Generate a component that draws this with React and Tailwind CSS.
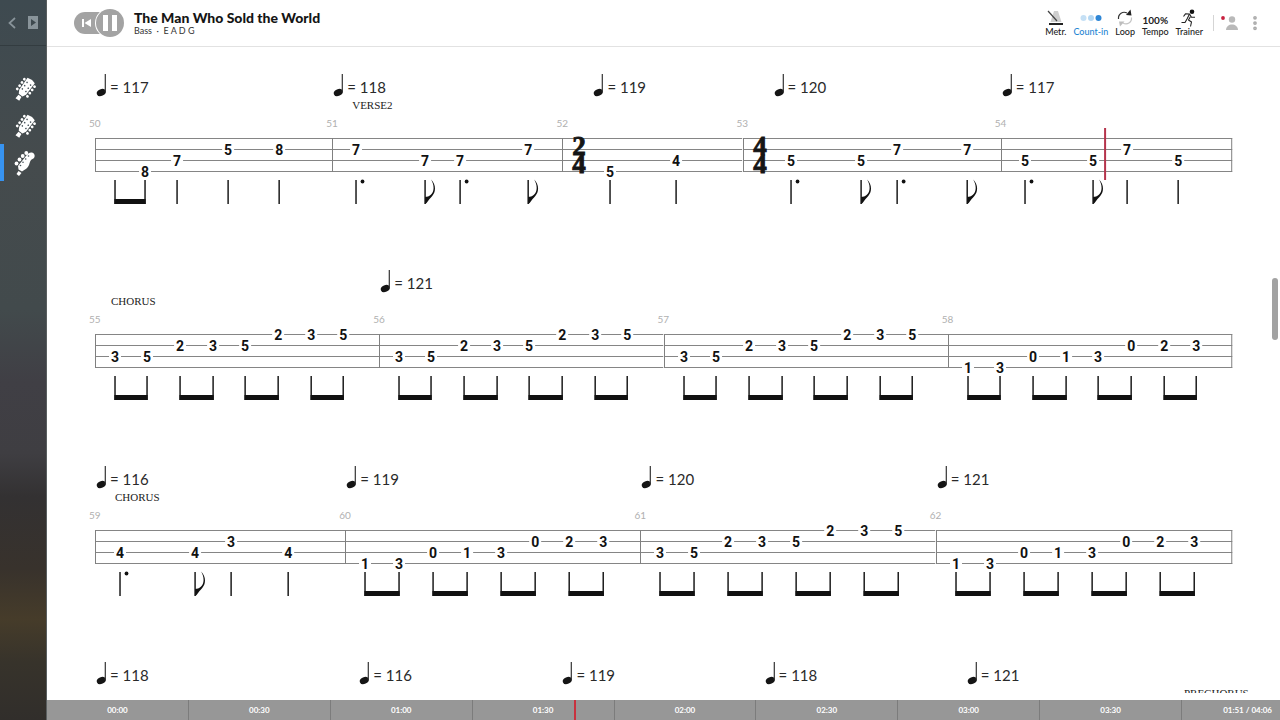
import { MoreVertical } from 'lucide-react';

// ─── Score data ───────────────────────────────────────────────────────────────
// note: [offset inside the measure, fret, string, mark]
// string 1 is the highest line, mark is 'dot' or 'flag'

const SLOTS = [20, 52, 85, 118, 150, 183, 216, 248];
const SLOTS_WIDE = [20, 54, 88, 122, 156, 190, 224, 258];

const RISE = [['3', 3], ['5', 3], ['2', 2], ['3', 2], ['5', 2], ['2', 1], ['3', 1], ['5', 1]];
const TURN = [['1', 4], ['3', 4], ['0', 3], ['1', 3], ['3', 3], ['0', 2], ['2', 2], ['3', 2]];

const PAIRS = [[0, 1], [2, 3], [4, 5], [6, 7]];

const place = (slots, riff) => riff.map(([fret, string], i) => [slots[i], fret, string]);

const SYSTEMS = [
  [
    {
      number: 50, width: 237, tempo: 117, beams: [[0, 1]],
      notes: [[20, '', 4], [50, '8', 4], [82, '7', 3], [133, '5', 2], [184, '8', 2]],
    },
    {
      number: 51, width: 230, tempo: 118, marker: 'VERSE2', markerPad: 'pl-5',
      notes: [[24, '7', 2, 'dot'], [93, '7', 3, 'flag'], [128, '7', 3, 'dot'], [196, '7', 2, 'flag']],
    },
    {
      number: 52, width: 180, tempo: 119, time: ['2', '4'],
      notes: [[48, '5', 4], [114, '4', 3]],
    },
    {
      number: 53, width: 258, tempo: 120, time: ['4', '4'],
      notes: [[48, '5', 3, 'dot'], [118, '5', 3, 'flag'], [154, '7', 2, 'dot'], [224, '7', 2, 'flag']],
    },
    {
      number: 54, width: 231, tempo: 117, cursor: 103,
      notes: [[24, '5', 3, 'dot'], [92, '5', 3, 'flag'], [126, '7', 2], [177, '5', 3]],
    },
  ],
  [
    { number: 55, width: 284, marker: 'CHORUS', markerPad: 'pl-4', beams: PAIRS, notes: place(SLOTS, RISE) },
    { number: 56, width: 284, tempo: 121, beams: PAIRS, notes: place(SLOTS, RISE) },
    { number: 57, width: 284, beams: PAIRS, notes: place(SLOTS, RISE) },
    { number: 58, width: 284, beams: PAIRS, notes: place(SLOTS, TURN) },
  ],
  [
    {
      number: 59, width: 250, tempo: 116, marker: 'CHORUS', markerPad: 'pl-5',
      notes: [[25, '4', 3, 'dot'], [100, '4', 3, 'flag'], [136, '3', 2], [193, '4', 3]],
    },
    { number: 60, width: 295, tempo: 119, beams: PAIRS, notes: place(SLOTS_WIDE, TURN) },
    { number: 61, width: 295, tempo: 120, beams: PAIRS, notes: place(SLOTS_WIDE, RISE) },
    { number: 62, width: 296, tempo: 121, beams: PAIRS, notes: place(SLOTS_WIDE, TURN) },
  ],
  // staves of this system are below the fold, only the heads are drawn
  [
    { number: 63, width: 263, tempo: 118 },
    { number: 64, width: 203, tempo: 116 },
    { number: 65, width: 202, tempo: 119 },
    { number: 66, width: 202, tempo: 118 },
    { number: 67, width: 202, tempo: 121 },
    { number: 68, width: 64, marker: 'PRECHORUS', markerPad: 'pl-4' },
  ],
];

const LINES = [7, 18, 29, 40];
const TICKS = ['00:00', '00:30', '01:00', '01:30', '02:00', '02:30', '03:00', '03:30'];

// ─── Score ────────────────────────────────────────────────────────────────────

function Tempo({ value, shifted }) {
  return (
    <div className={`flex items-end ${shifted ? 'pl-8' : 'pl-[2px]'}`}>
      <svg width="9" height="24" viewBox="0 0 9 24" className="overflow-visible">
        <ellipse cx="4.300" cy="19.500" rx="4.700" ry="3.400" transform="rotate(-24 4.300 19.500)" fill="#151515" />
        <path d="M8.300 19V1" stroke="#333" strokeWidth="1.200" />
      </svg>
      <span className="pl-1 text-[15px] leading-[20px] text-[#2a2a2a] whitespace-nowrap">= {value}</span>
    </div>
  );
}

function Note({ x, fret, string, mark }) {
  const y = LINES[string - 1];
  return (
    <svg x={x} className="overflow-visible">
      {fret && (
        <>
          <rect x="-6" y={y - 5} width="12" height="11" fill="#fff" />
          <text
            x="0"
            y={y + 5}
            textAnchor="middle"
            className="text-[14px] font-bold font-['Roboto',sans-serif]"
            fill="#111"
          >
            {fret}
          </text>
        </>
      )}
      <path d="M0 48V72" stroke="#1c1c1c" strokeWidth="1.500" />
      {mark === 'dot' && <circle cx="6.500" cy="49.500" r="1.900" fill="#111" />}
      {mark === 'flag' && (
        <path
          d="M0 72V65C4 65 8.500 62 8.500 56C8.500 52.500 7.500 50 6 47.500C8.500 50 9.900 53 9.900 56.500C9.900 63 5.500 65 1.500 71Z"
          fill="#111"
        />
      )}
    </svg>
  );
}

function Staff({ measure, last }) {
  const { width, notes, beams = [], time, cursor } = measure;
  const at = (x) => `${(x / width) * 100}%`;

  return (
    <svg width="100%" height="84" className="block overflow-visible">
      {LINES.map(y => (
        <rect key={y} x="0" y={y - 1} width="100%" height="1" fill="#858585" />
      ))}
      <rect x="0" y="6" width="1" height="34" fill="#808080" />
      {last && (
        <svg x="100%" className="overflow-visible">
          <rect x="-1" y="6" width="1" height="34" fill="#808080" />
        </svg>
      )}
      {time && (
        <g
          className="text-[27px] font-bold font-['Liberation_Serif',serif]"
          fill="#151515"
          stroke="#151515"
          strokeWidth="0.900"
          textAnchor="middle"
        >
          <text x="17" y="23">{time[0]}</text>
          <text x="17" y="41">{time[1]}</text>
        </g>
      )}
      {notes.map(([x, fret, string, mark]) => (
        <Note key={x} x={at(x)} fret={fret} string={string} mark={mark} />
      ))}
      {beams.map(([a, b]) => (
        <rect key={a} x={at(notes[a][0] - 0.6)} y="67" width={at(notes[b][0] - notes[a][0] + 1.2)} height="5" fill="#111" />
      ))}
      {cursor && <rect x={at(cursor)} y="-4" width="2" height="52" fill="#b5344c" />}
    </svg>
  );
}

function Measure({ measure, last }) {
  return (
    <div className="min-w-0 basis-0" style={{ flexGrow: measure.width }}>
      <div className="h-6">
        {measure.tempo && <Tempo value={measure.tempo} shifted={Boolean(measure.time)} />}
      </div>
      <div className={`h-[17px] text-[11px] leading-[17px] text-[#222] whitespace-nowrap font-['Liberation_Serif',serif] ${measure.markerPad || ''}`}>
        {measure.marker}
      </div>
      {measure.notes && (
        <>
          <div className="-ml-[6px] h-[18px] text-[10px] leading-[18px] text-[#b0b0b0]">{measure.number}</div>
          <Staff measure={measure} last={last} />
        </>
      )}
    </div>
  );
}

// ─── Sidebar ──────────────────────────────────────────────────────────────────

function GuitarHead() {
  return (
    <svg width="24" height="26" viewBox="-12 -13 24 26">
      <g transform="rotate(36)" fill="#fff">
        <path d="M-4.500 -10.500Q0 -12 4.500 -10.500L4.200 4L2.300 7.500H-2.300L-4.200 4Z" />
        <path d="M-1.800 8.500H1.800L2.300 13H-2.300Z" />
        {[-7.5, -3.5, 0.5, 4.5].map(y => (
          <g key={y}>
            <circle cx="-6.300" cy={y} r="1.400" />
            <circle cx="6.300" cy={y} r="1.400" />
          </g>
        ))}
        {[-6.5, -2.5, 1.5].map(y => (
          <g key={y} fill="#46525a">
            <circle cx="-2.200" cy={y} r="0.800" />
            <circle cx="2.200" cy={y} r="0.800" />
          </g>
        ))}
      </g>
    </svg>
  );
}

function BassHead() {
  return (
    <svg width="24" height="26" viewBox="-12 -13 24 26" fill="#fff">
      <path d="M-7 3L1 -7C2.500 -9 4.500 -11 7 -10.500C10.500 -9.500 10.500 -5 7.500 -4C5.500 -3.500 5 -1 4 2C3 5 0 6.500 -3 8.500L-6.500 6.500Z" />
      <path d="M-6.500 8L-3.500 10L-6 13L-8.500 11Z" />
      <circle cx="-8.500" cy="0.500" r="1.900" />
      <circle cx="-5.500" cy="-3.500" r="1.900" />
      <circle cx="-2.300" cy="-7" r="1.900" />
      <circle cx="1.300" cy="-10" r="1.900" />
      <g fill="#46525a">
        <circle cx="-4.500" cy="2.500" r="0.800" />
        <circle cx="-2" cy="-0.800" r="0.800" />
        <circle cx="0.700" cy="-4" r="0.800" />
        <circle cx="3.500" cy="-7" r="0.800" />
      </g>
    </svg>
  );
}

function Track({ label, active, children }) {
  return (
    <button
      aria-label={label}
      aria-pressed={Boolean(active)}
      className={`flex h-[37px] w-full items-center justify-center border-l-4 ${active ? 'border-[#3793f0]' : 'border-transparent'}`}
    >
      {children}
    </button>
  );
}

function Sidebar() {
  return (
    <nav className="flex w-[47px] shrink-0 flex-col border-r border-[#5a5f60] bg-[linear-gradient(#3e4a50_0%,#454b4d_22%,#424a4c_43%,#403f45_53%,#3f3e42_63%,#333132_69%,#38322c_79%,#463c2a_86%,#37332b_92%,#312e2b_100%)]">
      <div className="flex h-[46px] items-center gap-3 border-b border-[#333c40] pl-2 text-[#89949a]">
        <button aria-label="Back">
          <svg width="8" height="12" viewBox="0 0 8 12" className="block">
            <path d="M7 1L1.500 6L7 11" fill="none" stroke="currentColor" strokeWidth="1.700" />
          </svg>
        </button>
        <button aria-label="Show tracks">
          <svg width="10" height="13" viewBox="0 0 10 13" className="block">
            <path fillRule="evenodd" fill="currentColor" d="M0 0H10V13H0ZM3 3V10L8 6.500Z" />
          </svg>
        </button>
      </div>
      <div className="pt-6">
        <Track label="Guitar 1"><GuitarHead /></Track>
        <Track label="Guitar 2"><GuitarHead /></Track>
        <Track label="Bass" active><BassHead /></Track>
      </div>
    </nav>
  );
}

// ─── Header ───────────────────────────────────────────────────────────────────

function Tool({ label, active, children }) {
  return (
    <button className={`flex flex-col items-center ${active ? 'text-[#1f86d3]' : 'text-[#222]'}`}>
      <span className="flex h-[18px] items-center justify-center">{children}</span>
      <span className="text-[9px] leading-[10px] font-medium">{label}</span>
    </button>
  );
}

function Header() {
  return (
    <header className="flex h-[47px] shrink-0 items-center border-b border-[#e2e2e2] pr-4 pl-[27px]">
      <div className="flex items-center">
        <button aria-label="Back to start" className="flex h-[22px] w-9 items-center rounded-l-full bg-[#a3a3a3] pl-2">
          <svg width="10" height="10" viewBox="0 0 10 10" fill="#fff">
            <path d="M0 1H2V9H0ZM9 1V9L2.500 5Z" />
          </svg>
        </button>
        <button
          aria-label="Pause"
          className="-ml-[14px] flex size-7 items-center justify-center gap-1 rounded-full bg-[#a3a3a3] ring-1 ring-white"
        >
          <span className="h-4 w-[5px] bg-white" />
          <span className="h-4 w-[5px] bg-white" />
        </button>
      </div>
      <div className="pl-[10px]">
        <h1 className="text-[14px] leading-[15px] font-black text-[#151515]">The Man Who Sold the World</h1>
        <p className="text-[9px] leading-[11px] text-[#333]">Bass &nbsp;·&nbsp; E A D G</p>
      </div>

      <div className="ml-auto flex items-center gap-[7px]">
        <Tool label="Metr.">
          <svg width="16" height="16" viewBox="0 0 16 16" className="overflow-visible">
            <path d="M6 1H10L13.500 12H2.500Z" fill="#cfcfcf" />
            <path d="M1 13H15V15H1Z" fill="#222" />
            <path d="M0 1L9 11" stroke="#444" strokeWidth="1.200" />
          </svg>
        </Tool>
        <Tool label="Count-in" active>
          <svg width="22" height="8" viewBox="0 0 22 8">
            <circle cx="3.500" cy="4" r="3" fill="#c5e0f5" />
            <circle cx="11" cy="4" r="3" fill="#b5d8f3" />
            <circle cx="18.500" cy="4" r="3" fill="#2e86d6" />
          </svg>
        </Tool>
        <Tool label="Loop">
          <svg width="16" height="18" viewBox="0 0 16 18">
            <path d="M1.500 10C1 4.500 6 2 10 4" fill="none" stroke="#333" strokeWidth="1.200" />
            <path d="M9 6L13.500 0.500L14.500 6.500Z" fill="#222" />
            <path d="M14.500 8.500C15 13.500 10 16.500 6 14" fill="none" stroke="#c4c4c4" strokeWidth="1.200" />
            <path d="M7.500 12.500L2 12.500L3 17.500Z" fill="#bdbdbd" />
          </svg>
        </Tool>
        <Tool label="Tempo">
          <span className="pt-1 text-[10px] leading-[14px] font-bold text-[#222]">100%</span>
        </Tool>
        <Tool label="Trainer">
          <svg width="16" height="18" viewBox="0 0 16 18" fill="none" stroke="#222" strokeWidth="1.100" strokeLinejoin="round">
            <circle cx="11" cy="2.800" r="2.300" fill="#111" stroke="none" />
            <path d="M2.500 7.500L4.500 4.800L8.500 5L6 10L4 13.500L0.500 13.500" />
            <path d="M8.500 5L10.500 8.200H14" />
            <path d="M9.500 7.500L7.500 11L10.500 13L9.500 17.500" />
          </svg>
        </Tool>
        <div className="flex items-center gap-[7px] pl-[3px]">
          <span className="h-4 w-px bg-[#d5d5d5]" />
          <button aria-label="Account">
            <svg width="18" height="16" viewBox="0 0 18 16" className="block">
              <circle cx="2" cy="3" r="1.900" fill="#c8213f" />
              <circle cx="11" cy="4.500" r="3.200" fill="#b9b9b9" />
              <path d="M5 15C5 7.500 17 7.500 17 15Z" fill="#b9b9b9" />
            </svg>
          </button>
          <button aria-label="More" className="text-[#aaa]">
            <MoreVertical size={18} strokeWidth={3} />
          </button>
        </div>
      </div>
    </header>
  );
}

// ─── Timeline ─────────────────────────────────────────────────────────────────

function Timeline() {
  return (
    <footer className="flex h-5 shrink-0 bg-[#979797] text-[8px] leading-[21px] font-bold text-white">
      <div className="relative flex flex-1">
        {TICKS.map(tick => (
          <span key={tick} className="flex-1 border-r border-[#7c7c7c] text-center">{tick}</span>
        ))}
        <span className="absolute inset-y-0 w-[2px] bg-[#c8323f]" style={{ left: `${(111.5 / 240) * 100}%` }} />
      </div>
      <span className="w-[98px] pr-2 text-right">01:51 / 04:06</span>
    </footer>
  );
}

export default function App() {
  return (
    <div className="flex h-screen bg-white font-['Lato',sans-serif]">
      <Sidebar />
      <div className="flex min-w-0 flex-1 flex-col">
        <Header />
        <main className="relative mb-[7px] min-h-0 flex-1 overflow-hidden pt-[26px] pr-12 pl-[48px]">
          {SYSTEMS.map(system => (
            <section key={system[0].number} className="flex h-[196px]">
              {system.map((measure, i) => (
                <Measure key={measure.number} measure={measure} last={i === system.length - 1} />
              ))}
            </section>
          ))}
          <span className="absolute top-[231px] right-[2px] h-[62px] w-[6px] rounded-full bg-[#a2a2a2]" />
        </main>
        <Timeline />
      </div>
    </div>
  );
}
